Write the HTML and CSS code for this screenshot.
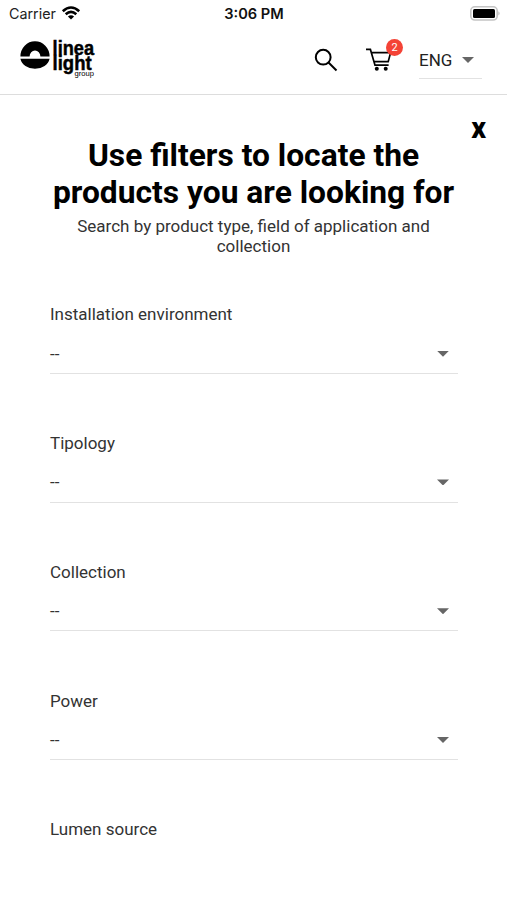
FILE: index.html
```
<!DOCTYPE html>
<html lang="en">
<head>
<meta charset="utf-8">
<meta name="viewport" content="width=device-width, initial-scale=1">
<title>Linea Light Group</title>
<link rel="stylesheet" href="styles.css">
</head>
<body>
<div class="status">
  <div class="carrier"><span>Carrier</span>
    <svg width="20" height="16" viewBox="0 0 20 16" fill="none" stroke="#000" stroke-width="2.6"><path d="M1.8 6.2Q10-1.2 18.2 6.2M4.7 9.3Q10 4.6 15.3 9.3"/><path d="M10 14.6 6.9 11.5Q10 9 13.1 11.5Z" fill="#000" stroke="none"/></svg>
  </div>
  <div class="time">3:06 PM</div>
  <div class="power">
    <svg width="31" height="15" viewBox="0 0 31 15"><rect x=".8" y=".8" width="26.4" height="13.2" rx="4" fill="#fff" stroke="#c4c4c4" stroke-width="1.6"/><rect x="3" y="3" width="22" height="9" rx="1.5"/><path d="M28.5 5.2Q30.5 7.4 28.5 9.6Z" fill="#aaa"/></svg>
  </div>
</div>
<header class="header">
  <svg class="logo" width="76" height="40" viewBox="0 0 76 40">
    <path d="M.4 17.6A14.6 15.3 0 0 1 29.6 17.6H20.4A5.4 6 0 0 0 9.6 17.6ZM.4 19.8H29.6A14.8 12 0 0 1 .4 19.8Z"/>
    <text class="logo-name" x="32.6" y="15.8" textLength="41.4" lengthAdjust="spacingAndGlyphs">linea</text>
    <text class="logo-name" x="32.6" y="31.4" textLength="39" lengthAdjust="spacingAndGlyphs">light</text>
    <text class="logo-group" x="54.5" y="37.2" textLength="19.5" lengthAdjust="spacingAndGlyphs">group</text>
  </svg>
  <div class="tools">
    <svg class="search" width="24" height="24" viewBox="0 0 24 24" fill="none" stroke="#000" stroke-width="2"><circle cx="9.2" cy="9.2" r="7.4"/><path d="m14.5 14.5 8 8"/></svg>
    <div class="cart">
      <svg width="27" height="24" viewBox="0 0 27 24" fill="none" stroke="#000" stroke-width="1.7"><path d="M0 1.4H4.4L9 17.2H22.6M5.6 4.6H24.6L22.2 13.6H8"/><circle cx="10.8" cy="20.8" r="2" fill="#000" stroke="none"/><circle cx="19.7" cy="20.8" r="2" fill="#000" stroke="none"/></svg>
      <span class="badge">2</span>
    </div>
    <div class="lang"><span>ENG</span><i class="arrow"></i></div>
  </div>
</header>
<main class="filters">
  <div class="close">x</div>
  <h1>Use filters to locate the<br>products you are looking for</h1>
  <p class="intro">Search by product type, field of application and<br>collection</p>
  <form class="fields">
    <div class="field"><label>Installation environment</label><div class="select"><span>--</span><i class="arrow"></i></div></div>
    <div class="field"><label>Tipology</label><div class="select"><span>--</span><i class="arrow"></i></div></div>
    <div class="field"><label>Collection</label><div class="select"><span>--</span><i class="arrow"></i></div></div>
    <div class="field"><label>Power</label><div class="select"><span>--</span><i class="arrow"></i></div></div>
    <div class="field"><label>Lumen source</label></div>
  </form>
</main>
</body>
</html>
```
FILE: styles.css
```
* { box-sizing: border-box; }
body { margin: 0; height: 900px; overflow: hidden; background: #fff; color: #333; font: 17px/20px Roboto, sans-serif; }
svg { display: block; flex: none; }
.status { height: 28px; padding: 0 8px 0 9px; display: grid; grid-template-columns: 1fr auto 1fr; align-items: center; font: 15px/28px Inter, sans-serif; color: #222; }
.carrier { display: flex; align-items: center; gap: 5px; font-size: 14.3px; }
.carrier svg { margin-top: -3px; }
.time { font-size: 14.6px; font-weight: 600; color: #111; }
.power { display: flex; justify-content: flex-end; }
.power svg { margin-right: -2px; margin-top: -1px; }
.header { height: 67px; border-bottom: 1px solid #ddd; display: flex; justify-content: space-between; align-items: flex-start; padding: 11px 25px 0 20px; }
.logo { overflow: visible; }
.logo-name { font: 700 20.5px "Liberation Sans", sans-serif; stroke: #000; stroke-width: .5px; }
.logo-group { font: 7.6px "Liberation Sans", sans-serif; }
.tools { display: flex; align-items: flex-start; }
.search { margin: 9px 28px 0 0; }
.cart { position: relative; margin: 9px 26px 0 0; }
.badge { position: absolute; left: 20px; top: -9px; width: 17px; height: 17px; border-radius: 50%; background: #f44336; color: #fff; font-size: 11px; line-height: 17px; text-align: center; }
.lang { width: 63px; height: 40px; padding: 3px 8px 0 0; border-bottom: 1px solid #e2e2e2; display: flex; align-items: center; justify-content: space-between; color: #222; }
.arrow { width: 12px; height: 6px; background: #666; clip-path: polygon(0 0, 100% 0, 50% 100%); }
.close { height: 43px; padding: 18px 21px 0 0; text-align: right; color: #000; font: 800 29px/30px Roboto, sans-serif; }
h1 { margin: 0; color: #000; font-size: 31.75px; font-weight: 700; line-height: 36.5px; text-align: center; }
.intro { margin: 6px 0 0; text-align: center; line-height: 19.5px; }
.fields { padding: 48.4px 49px 0 50px; display: grid; gap: 58.75px; }
.field { height: 70px; }
.field label { display: block; height: 20px; }
.select { height: 49.6px; padding: 10px 9px 0 0; border-bottom: 1px solid #e2e2e2; display: flex; align-items: center; justify-content: space-between; }
```
